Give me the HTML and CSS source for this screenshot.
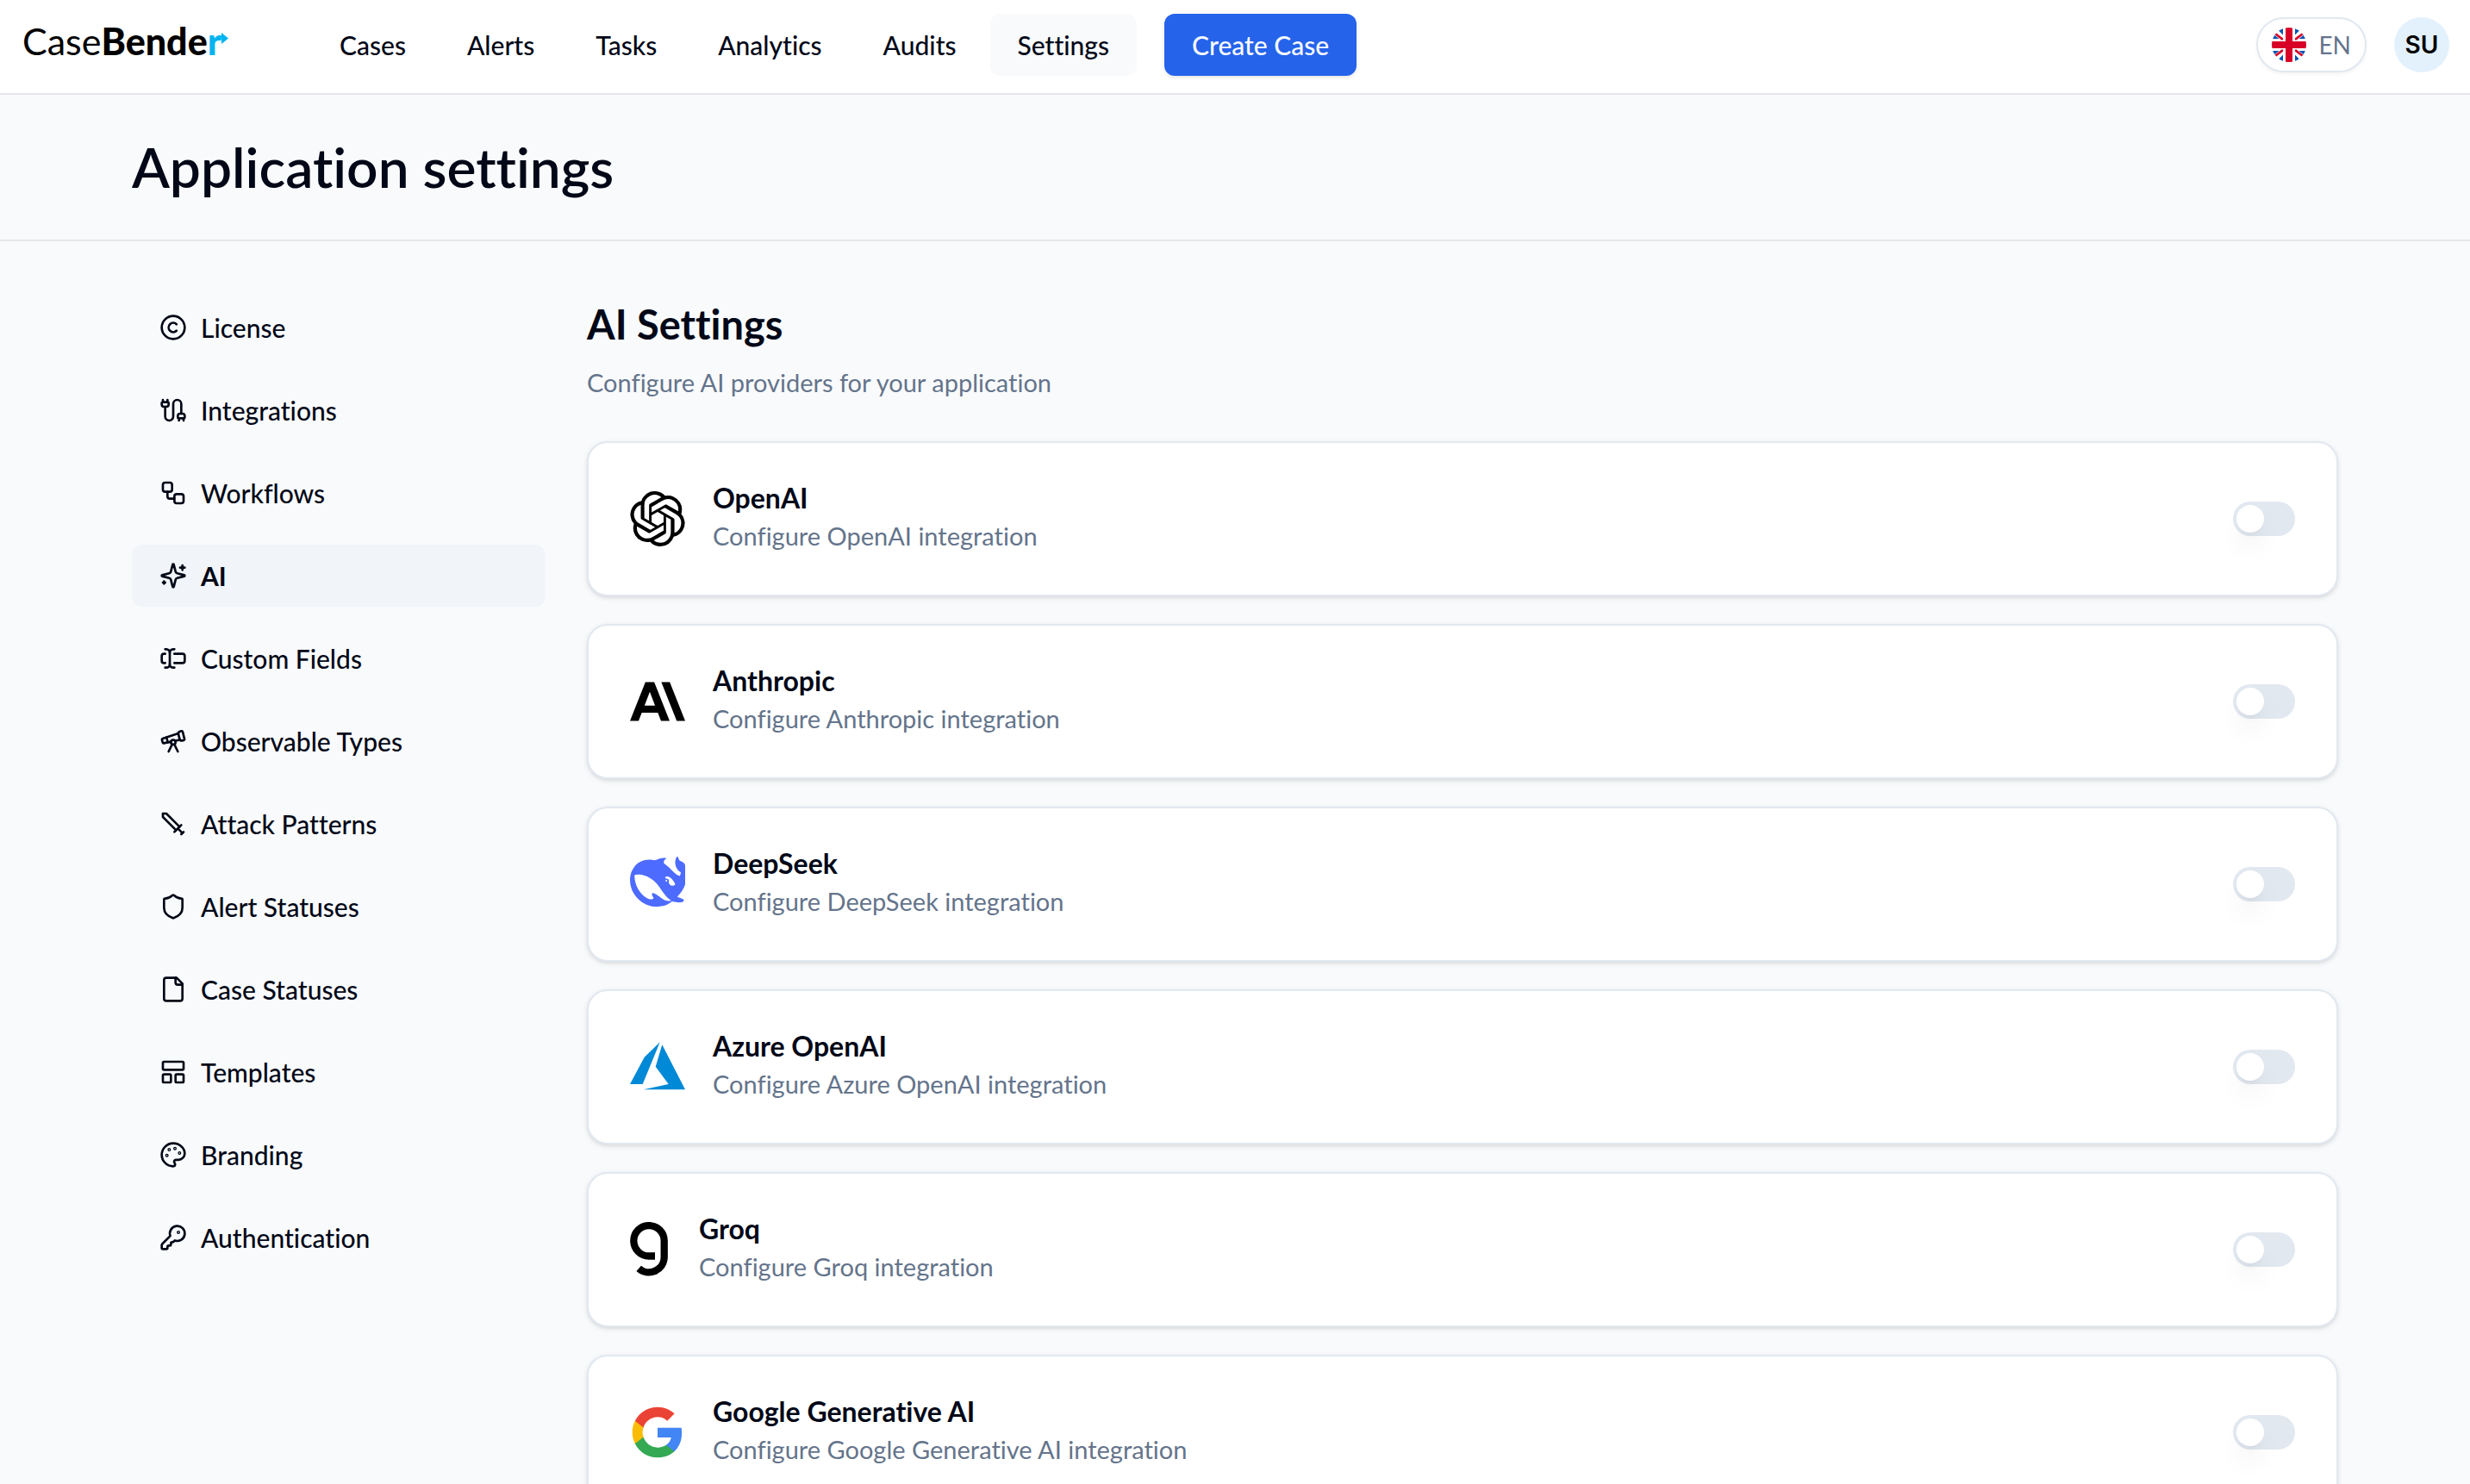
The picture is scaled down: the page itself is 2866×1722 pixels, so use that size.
FILE: index.html
```html
<!DOCTYPE html>
<html lang="en">
<head>
<meta charset="utf-8">
<meta name="viewport" content="width=device-width, initial-scale=1">
<title>CaseBender - Application settings</title>
<link rel="stylesheet" href="styles.css">
</head>
<body>
<header class="topbar">
  <a class="logo" href="#"><span class="logo-light">Case</span><span class="logo-bold">Bende</span><span class="logo-accent">r</span><svg class="logo-arrow" viewBox="0 0 8 13" aria-hidden="true"><path d="M0 0L8 6.5L0 13Z"/></svg></a>
  <nav class="nav">
    <a class="nav-link" href="#">Cases</a>
    <a class="nav-link" href="#">Alerts</a>
    <a class="nav-link" href="#">Tasks</a>
    <a class="nav-link" href="#">Analytics</a>
    <a class="nav-link" href="#">Audits</a>
    <a class="nav-link active" href="#">Settings</a>
  </nav>
  <button class="create" type="button">Create Case</button>
  <div class="account">
    <button class="lang" type="button">
      <svg class="flag" viewBox="0 0 512 512" aria-hidden="true">
        <clipPath id="round"><circle cx="256" cy="256" r="256"/></clipPath>
        <g clip-path="url(#round)">
          <path fill="#fff" d="M0 0H512V512H0Z"/>
          <path fill="#0052b4" d="M40 90L135 167H0V90ZM100 40L167 110V0H100ZM412 40L345 110V0H412ZM472 90L377 167H512V90ZM40 422L135 345H0V422ZM100 472L167 402V512H100ZM412 472L345 402V512H412ZM472 422L377 345H512V422Z"/>
          <path fill="#fff" d="M0 0L40 40L200 200H150L0 80ZM512 0L312 200H362L512 80ZM0 512L200 312H150L0 432ZM512 512L312 312H362L512 432Z"/>
          <path stroke="#d80027" stroke-width="34" d="M50 90L165 178M462 90L347 178M50 422L165 334M462 422L347 334"/>
          <path fill="#fff" d="M167 0H200V167H167ZM312 0H345V167H312ZM167 345H200V512H167ZM312 345H345V512H312Z"/>
          <path fill="#d80027" d="M205 0H307V205H512V307H307V512H205V307H0V205H205Z"/>
        </g>
      </svg>
      <span>EN</span>
    </button>
    <button class="avatar" type="button">SU</button>
  </div>
</header>
<section class="page-head">
  <h1 class="page-title">Application settings</h1>
</section>
<main class="page-body">
  <nav class="sidebar" aria-label="Settings">
    <a class="side-link" href="#"><svg class="icon" viewBox="0 0 24 24"><circle cx="12" cy="12" r="10"/><path d="M14.83 14.83a4 4 0 1 1 0-5.66"/></svg>License</a>
    <a class="side-link" href="#"><svg class="icon" viewBox="0 0 24 24"><path d="M17 21v-2a1 1 0 0 1-1-1v-1a2 2 0 0 1 2-2h2a2 2 0 0 1 2 2v1a1 1 0 0 1-1 1"/><path d="M19 15V6.500a3.500 3.500 0 0 0-7 0v11a3.500 3.500 0 0 1-7 0V9"/><path d="M21 21v-2h-4"/><path d="M3 5h4V3"/><path d="M7 5a1 1 0 0 1 1 1v1a2 2 0 0 1-2 2H4a2 2 0 0 1-2-2V6a1 1 0 0 1 1-1V3"/></svg>Integrations</a>
    <a class="side-link" href="#"><svg class="icon" viewBox="0 0 24 24"><rect width="8" height="8" x="3" y="3" rx="2"/><path d="M7 11v4a2 2 0 0 0 2 2h4"/><rect width="8" height="8" x="13" y="13" rx="2"/></svg>Workflows</a>
    <a class="side-link active" href="#"><svg class="icon" viewBox="0 0 24 24"><path d="M9.937 15.5A2 2 0 0 0 8.500 14.063l-6.135-1.582a.5.5 0 0 1 0-.962L8.500 9.936A2 2 0 0 0 9.937 8.500l1.582-6.135a.5.5 0 0 1 .963 0L14.063 8.500A2 2 0 0 0 15.500 9.937l6.135 1.581a.5.5 0 0 1 0 .964L15.500 14.063a2 2 0 0 0-1.437 1.437l-1.582 6.135a.5.5 0 0 1-.963 0z"/><path d="M20 3v4"/><path d="M22 5h-4"/><path d="M4 17v2"/><path d="M5 18H3"/></svg>AI</a>
    <a class="side-link" href="#"><svg class="icon" viewBox="0 0 24 24"><path d="M5 4h1a3 3 0 0 1 3 3 3 3 0 0 1 3-3h1"/><path d="M13 20h-1a3 3 0 0 1-3-3 3 3 0 0 1-3 3H5"/><path d="M5 16H4a2 2 0 0 1-2-2v-4a2 2 0 0 1 2-2h1"/><path d="M13 8h7a2 2 0 0 1 2 2v4a2 2 0 0 1-2 2h-7"/><path d="M9 7v10"/></svg>Custom Fields</a>
    <a class="side-link" href="#"><svg class="icon" viewBox="0 0 24 24"><path d="m10.065 12.493-6.18 1.318a.934.934 0 0 1-1.108-.702l-.537-2.15a1.07 1.07 0 0 1 .691-1.265l13.504-4.44"/><path d="m13.56 11.747 4.332-.924"/><path d="m16 21-3.105-6.210"/><path d="M16.485 5.940a2 2 0 0 1 1.455-2.425l1.090-.272a1 1 0 0 1 1.212.727l1.515 6.060a1 1 0 0 1-.727 1.213l-1.090.272a2 2 0 0 1-2.425-1.455z"/><path d="m6.158 8.633 1.114 4.456"/><path d="m8 21 3.105-6.210"/><circle cx="12" cy="13" r="2"/></svg>Observable Types</a>
    <a class="side-link" href="#"><svg class="icon" viewBox="0 0 24 24"><path d="M14.500 17.500L3 6V3h3l11.500 11.500"/><path d="M13 19l6-6"/><path d="M16 16l4 4"/><path d="M19 21l2-2"/></svg>Attack Patterns</a>
    <a class="side-link" href="#"><svg class="icon" viewBox="0 0 24 24"><path d="M20 13c0 5-3.500 7.500-7.660 8.950a1 1 0 0 1-.67-.01C7.500 20.500 4 18 4 13V6a1 1 0 0 1 1-1c2 0 4.500-1.200 6.240-2.720a1.170 1.170 0 0 1 1.520 0C14.510 3.810 17 5 19 5a1 1 0 0 1 1 1z"/></svg>Alert Statuses</a>
    <a class="side-link" href="#"><svg class="icon" viewBox="0 0 24 24"><path d="M15 2H6a2 2 0 0 0-2 2v16a2 2 0 0 0 2 2h12a2 2 0 0 0 2-2V7Z"/><path d="M14 2v4a2 2 0 0 0 2 2h4"/></svg>Case Statuses</a>
    <a class="side-link" href="#"><svg class="icon" viewBox="0 0 24 24"><rect width="18" height="7" x="3" y="3" rx="1"/><rect width="7" height="7" x="3" y="14" rx="1"/><rect width="7" height="7" x="14" y="14" rx="1"/></svg>Templates</a>
    <a class="side-link" href="#"><svg class="icon" viewBox="0 0 24 24"><circle cx="13.5" cy="6.5" r=".5"/><circle cx="17.5" cy="10.5" r=".5"/><circle cx="8.5" cy="7.5" r=".5"/><circle cx="6.5" cy="12.5" r=".5"/><path d="M12 2C6.500 2 2 6.500 2 12s4.500 10 10 10c.926 0 1.648-.746 1.648-1.688 0-.437-.18-.835-.437-1.125-.29-.289-.438-.652-.438-1.125a1.640 1.640 0 0 1 1.668-1.668h1.996c3.051 0 5.555-2.503 5.555-5.554C21.965 6.012 17.461 2 12 2z"/></svg>Branding</a>
    <a class="side-link" href="#"><svg class="icon" viewBox="0 0 24 24"><path d="M2.586 17.414A2 2 0 0 0 2 18.828V21a1 1 0 0 0 1 1h3a1 1 0 0 0 1-1v-1a1 1 0 0 1 1-1h1a1 1 0 0 0 1-1v-1a1 1 0 0 1 1-1h.172a2 2 0 0 0 1.414-.586l.814-.814a6.500 6.500 0 1 0-4-4z"/><circle cx="16.5" cy="7.5" r=".5"/></svg>Authentication</a>
  </nav>
  <section class="content">
    <h2 class="section-title">AI Settings</h2>
    <p class="section-text">Configure AI providers for your application</p>
    <div class="cards">
      <article class="card">
        <svg class="brand" viewBox="0 0 24 24" aria-hidden="true"><path d="M22.2819 9.8211a5.9847 5.9847 0 0 0-.5157-4.9108 6.0462 6.0462 0 0 0-6.5098-2.9A6.0651 6.0651 0 0 0 4.9807 4.1818a5.9847 5.9847 0 0 0-3.9977 2.9 6.0462 6.0462 0 0 0 .7427 7.0966 5.98 5.98 0 0 0 .511 4.9107 6.051 6.051 0 0 0 6.5146 2.9001A5.9847 5.9847 0 0 0 13.2599 24a6.0557 6.0557 0 0 0 5.7718-4.2058 5.9894 5.9894 0 0 0 3.9977-2.9001 6.0557 6.0557 0 0 0-.7475-7.0729zm-9.022 12.6081a4.4755 4.4755 0 0 1-2.8764-1.0408l.1419-.0804 4.7783-2.7582a.7948.7948 0 0 0 .3927-.6813v-6.7369l2.02 1.1686a.071.071 0 0 1 .038.052v5.5826a4.504 4.504 0 0 1-4.4945 4.4944zm-9.6607-4.1254a4.4708 4.4708 0 0 1-.5346-3.0137l.142.0852 4.783 2.7582a.7712.7712 0 0 0 .7806 0l5.8428-3.3685v2.3324a.0804.0804 0 0 1-.0332.0615L9.74 19.9502a4.4992 4.4992 0 0 1-6.1408-1.6464zM2.3408 7.8956a4.485 4.485 0 0 1 2.3655-1.9728V11.6a.7664.7664 0 0 0 .3879.6765l5.8144 3.3543-2.0201 1.1685a.0757.0757 0 0 1-.071 0l-4.8303-2.7865A4.504 4.504 0 0 1 2.3408 7.872zm16.5963 3.8558L13.1038 8.364 15.1192 7.2a.0757.0757 0 0 1 .071 0l4.8303 2.7913a4.4944 4.4944 0 0 1-.6765 8.1042v-5.6772a.79.79 0 0 0-.407-.667zm2.0107-3.0231l-.142-.0852-4.7735-2.7818a.7759.7759 0 0 0-.7854 0L9.409 9.2297V6.8974a.0662.0662 0 0 1 .0284-.0615l4.8303-2.7866a4.4992 4.4992 0 0 1 6.6802 4.66zM8.3065 12.863l-2.02-1.1638a.0804.0804 0 0 1-.038-.0567V6.0742a4.4992 4.4992 0 0 1 7.3757-3.4537l-.142.0805L8.704 5.459a.7948.7948 0 0 0-.3927.6813zm1.0976-2.3654l2.602-1.4998 2.6069 1.4998v2.9994l-2.5974 1.4997-2.6067-1.4997Z"/></svg>
        <div class="card-text"><h3 class="card-title" id="openai">OpenAI</h3><p class="card-desc">Configure OpenAI integration</p></div>
        <input class="toggle" type="checkbox" role="switch" aria-labelledby="openai">
      </article>
      <article class="card">
        <svg class="brand" viewBox="0 0 24 24" aria-hidden="true"><path d="M17.3041 3.541h-3.6718l6.696 16.918H24Zm-10.6082 0L0 20.459h3.7442l1.3693-3.5527h7.0052l1.3693 3.5528h3.7442L10.5363 3.5409Zm-.3712 10.2232 2.2914-5.9456 2.2914 5.9456Z"/></svg>
        <div class="card-text"><h3 class="card-title" id="anthropic">Anthropic</h3><p class="card-desc">Configure Anthropic integration</p></div>
        <input class="toggle" type="checkbox" role="switch" aria-labelledby="anthropic">
      </article>
      <article class="card">
        <svg class="brand" viewBox="0 3 19.5 19.5" aria-hidden="true"><path fill="#4d6bfe" d="M23.748 4.482c-.254-.124-.364.113-.512.234-.051.039-.094.09-.137.136-.372.397-.806.657-1.373.626-.829-.046-1.537.214-2.163.848-.133-.782-.575-1.248-1.247-1.548-.352-.156-.708-.311-.955-.65-.172-.241-.219-.51-.305-.774-.055-.16-.11-.323-.293-.35-.2-.031-.278.136-.356.276-.313.572-.434 1.202-.422 1.84.027 1.436.633 2.58 1.838 3.393.137.093.172.187.129.323-.082.28-.18.552-.266.833-.055.179-.137.217-.329.14a5.526 5.526 0 0 1-1.736-1.18c-.857-.828-1.631-1.742-2.597-2.458a11.365 11.365 0 0 0-.689-.471c-.985-.957.13-1.743.388-1.836.27-.098.093-.432-.779-.428-.872.004-1.67.295-2.687.684a3.055 3.055 0 0 1-.465.137 9.597 9.597 0 0 0-2.883-.102c-1.885.21-3.39 1.102-4.497 2.623C.082 8.606-.231 10.684.152 12.85c.403 2.284 1.569 4.175 3.36 5.653 1.858 1.533 3.997 2.284 6.438 2.14 1.482-.085 3.133-.284 4.994-1.86.47.234.962.327 1.78.397.63.059 1.236-.03 1.705-.128.735-.156.684-.837.419-.961-2.155-1.004-1.682-.595-2.113-.926 1.096-1.296 2.746-2.642 3.392-7.003.05-.347.007-.565 0-.845-.004-.17.035-.237.23-.256a4.173 4.173 0 0 0 1.545-.475c1.396-.763 1.96-2.015 2.093-3.517.02-.23-.004-.467-.247-.588zM11.581 18c-2.089-1.642-3.102-2.183-3.52-2.16-.392.024-.321.471-.235.763.09.288.207.486.371.739.114.167.192.416-.113.603-.673.416-1.842-.14-1.897-.167-1.361-.802-2.5-1.86-3.301-3.307-.774-1.393-1.224-2.887-1.298-4.482-.02-.386.093-.522.477-.592a4.696 4.696 0 0 1 1.529-.039c2.132.312 3.946 1.265 5.468 2.774.868.86 1.525 1.887 2.202 2.891.72 1.066 1.494 2.082 2.48 2.914.348.292.625.514.891.677-.802.09-2.14.11-3.054-.614zm1-6.44a.306.306 0 0 1 .415-.287.302.302 0 0 1 .2.288.306.306 0 0 1-.31.307.303.303 0 0 1-.304-.308zm3.11 1.596c-.2.081-.399.151-.59.16a1.245 1.245 0 0 1-.798-.254c-.274-.23-.47-.358-.552-.758a1.73 1.73 0 0 1 .016-.588c.07-.327-.008-.537-.239-.727-.187-.156-.426-.199-.688-.199a.559.559 0 0 1-.254-.078.253.253 0 0 1-.114-.358c.028-.054.16-.186.192-.21.356-.202.767-.136 1.146.016.352.144.618.408 1.001.782.391.451.462.576.685.914.176.265.336.537.445.848.067.195-.019.354-.25.452z"/></svg>
        <div class="card-text"><h3 class="card-title" id="deepseek">DeepSeek</h3><p class="card-desc">Configure DeepSeek integration</p></div>
        <input class="toggle" type="checkbox" role="switch" aria-labelledby="deepseek">
      </article>
      <article class="card">
        <svg class="brand" viewBox="0 0 64 64" aria-hidden="true"><path fill="#0089d6" d="M0 52H14.700L34.700 3.300L16.700 20.700ZM37.300 6.300L29.700 31.700L44.700 52L15.700 58.300H64Z"/></svg>
        <div class="card-text"><h3 class="card-title" id="azure">Azure OpenAI</h3><p class="card-desc">Configure Azure OpenAI integration</p></div>
        <input class="toggle" type="checkbox" role="switch" aria-labelledby="azure">
      </article>
      <article class="card">
        <svg class="brand brand-narrow" viewBox="0 0 48 64" aria-hidden="true"><path fill="none" stroke="#000" stroke-width="8.300" d="M29 39.500H22A17.700 17.700 0 1 1 39.700 21.800V41.200A17.700 17.700 0 0 1 10.200 53.800"/></svg>
        <div class="card-text"><h3 class="card-title" id="groq">Groq</h3><p class="card-desc">Configure Groq integration</p></div>
        <input class="toggle" type="checkbox" role="switch" aria-labelledby="groq">
      </article>
      <article class="card">
        <svg class="brand" viewBox="0 0 24 24" aria-hidden="true"><path fill="#4285f4" d="M22.56 12.25c0-.78-.07-1.53-.2-2.25H12v4.26h5.92c-.26 1.37-1.04 2.53-2.21 3.31v2.77h3.57c2.08-1.92 3.28-4.74 3.28-8.09z"/><path fill="#34a853" d="M12 23c2.97 0 5.46-.98 7.28-2.66l-3.57-2.77c-.98.66-2.23 1.06-3.71 1.06-2.86 0-5.29-1.93-6.16-4.53H2.18v2.84C3.99 20.53 7.7 23 12 23z"/><path fill="#fbbc05" d="M5.84 14.09c-.22-.66-.35-1.36-.35-2.09s.13-1.43.35-2.09V7.07H2.18C1.43 8.55 1 10.22 1 12s.43 3.45 1.18 4.93l2.85-2.22.81-.62z"/><path fill="#ea4335" d="M12 5.38c1.62 0 3.06.56 4.21 1.64l3.15-3.15C17.45 2.09 14.97 1 12 1 7.7 1 3.99 3.47 2.18 7.07l3.66 2.84c.87-2.6 3.3-4.53 6.16-4.53z"/></svg>
        <div class="card-text"><h3 class="card-title" id="google">Google Generative AI</h3><p class="card-desc">Configure Google Generative AI integration</p></div>
        <input class="toggle" type="checkbox" role="switch" aria-labelledby="google">
      </article>
    </div>
  </section>
</main>
</body>
</html>
```

FILE: styles.css
```css
* {
  box-sizing: border-box;
}

html {
  scrollbar-width: none;
}

body {
  margin: 0;
  background: #f9fafc;
  color: #020817;
  font-family: Lato, "Open Sans", sans-serif;
  font-size: 29px;
  font-variant-ligatures: none;
  line-height: 40px;
}

h1,
h2,
h3,
p {
  margin: 0;
}

a {
  color: inherit;
  text-decoration: none;
}

button {
  border: 0;
  color: inherit;
  font: inherit;
  cursor: pointer;
}

/* Top bar */
.topbar {
  display: flex;
  align-items: center;
  padding: 16px 24px 20px;
  border-bottom: 2px solid #e5e7eb;
  background: #fff;
}

.logo {
  display: flex;
  flex: 0 0 338px;
  padding: 0 0 8px 2px;
  color: #000;
  font-size: 43px;
  line-height: 64px;
}

.logo-light {
  font-weight: 400;
}

.logo-bold,
.logo-accent {
  font-weight: 900;
}

.logo-accent,
.logo-arrow {
  color: #00b4f0;
}

.logo-arrow {
  width: 8px;
  height: 13px;
  margin-top: 22px;
  fill: currentColor;
}

.nav {
  display: flex;
  gap: 7px;
}

.nav-link,
.create {
  padding: 16px 32px;
  border-radius: 12px;
  font-size: 30px;
  font-weight: 500;
}

.nav-link.active {
  background: #f9fafc;
}

.create {
  margin-left: 32px;
  background: #2563eb;
  color: #f8fafc;
  box-shadow: 0 2px 4px rgba(0, 0, 0, 0.1);
}

.account {
  display: flex;
  align-items: center;
  gap: 32px;
  margin-left: auto;
}

.lang {
  display: flex;
  align-items: center;
  gap: 14px;
  height: 64px;
  padding: 0 16px;
  border: 2px solid #e2e8f0;
  border-radius: 32px;
  background: #fff;
  color: #64748b;
  font-size: 28px;
  box-shadow: 0 2px 4px rgba(0, 0, 0, 0.05);
}

.flag {
  width: 40px;
  height: 40px;
}

.avatar {
  width: 64px;
  height: 64px;
  padding: 0;
  border-radius: 50%;
  background: #e3f1fd;
  color: #000;
  font-family: Inter, sans-serif;
  font-size: 28px;
  font-weight: 600;
}

/* Page heading */
.page-head {
  padding: 48px 24px;
  border-bottom: 2px solid #e5e7eb;
}

.page-title,
.page-body {
  max-width: 2560px;
  margin: 0 auto;
}

.page-title {
  font-size: 64px;
  font-weight: 600;
  line-height: 72px;
}

.page-body {
  display: flex;
  align-items: flex-start;
  gap: 48px;
  padding: 64px 0;
}

/* Settings navigation */
.sidebar {
  display: flex;
  flex: 0 0 480px;
  flex-direction: column;
  gap: 24px;
}

.side-link {
  display: flex;
  align-items: center;
  gap: 16px;
  padding: 16px 32px;
  border-radius: 12px;
  font-size: 30px;
  font-weight: 500;
}

.side-link.active {
  background: #f1f5f9;
  font-weight: 700;
}

.icon {
  width: 32px;
  height: 32px;
  fill: none;
  stroke: currentColor;
  stroke-width: 2;
  stroke-linecap: round;
  stroke-linejoin: round;
}

/* Provider cards */
.content {
  flex: 1;
  min-width: 0;
}

.section-title {
  font-size: 47px;
  font-weight: 700;
  line-height: 64px;
}

.section-text {
  margin-top: 16px;
  color: #64748b;
}

.cards {
  display: flex;
  flex-direction: column;
  gap: 32px;
  margin-top: 48px;
}

.card {
  display: flex;
  align-items: center;
  gap: 32px;
  padding: 48px;
  border: 2px solid #e2e8f0;
  border-radius: 24px;
  background: #fff;
  box-shadow: 0 2px 6px rgba(0, 0, 0, 0.1), 0 2px 4px -2px rgba(0, 0, 0, 0.1);
}

.brand {
  flex: none;
  width: 64px;
  height: 64px;
}

.brand-narrow {
  width: 48px;
}

.card-text {
  flex: 1;
}

.card-title {
  font-size: 32px;
  font-weight: 700;
  line-height: 32px;
}

.card-desc {
  margin-top: 8px;
  color: #64748b;
}

.toggle {
  appearance: none;
  width: 72px;
  height: 40px;
  margin: 0;
  padding: 4px;
  border-radius: 20px;
  background: #e2e8f0;
  cursor: pointer;
}

.toggle::before {
  content: "";
  display: block;
  width: 32px;
  height: 32px;
  border-radius: 50%;
  background: #fff;
  box-shadow: 0 20px 30px -6px rgba(0, 0, 0, 0.1), 0 8px 12px -8px rgba(0, 0, 0, 0.1);
}

.toggle:checked {
  background: #2563eb;
}

.toggle:checked::before {
  margin-left: 32px;
}
```
